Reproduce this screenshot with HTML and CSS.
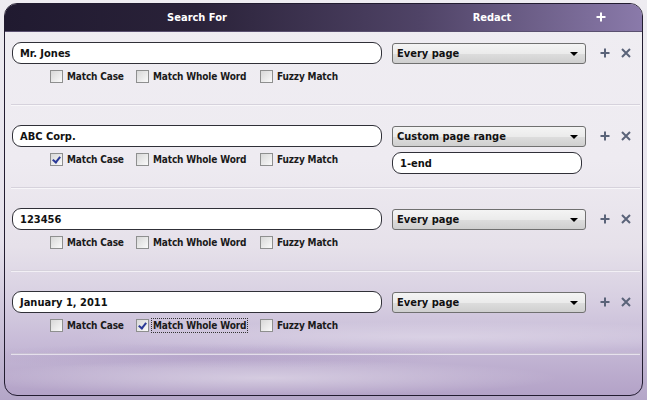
FILE: index.html
```html
<!DOCTYPE html>
<html>
<head>
<meta charset="utf-8">
<link rel="stylesheet" href="styles.css">
</head>
<body>
<div class="panel">
  <div class="header">
    <div class="h-search">Search For</div>
    <div class="h-redact">Redact</div>
    <div class="h-add"><svg width="10" height="10" viewBox="0 0 10 10"><path d="M5 0.5V9.5M0.5 5H9.5" stroke="#fff" stroke-width="2"/></svg></div>
  </div>

  <div class="row first">
    <div class="search">
      <div class="field">Mr. Jones</div>
      <div class="checks">
        <label class="chk"><span class="box"></span>Match Case</label>
        <label class="chk"><span class="box"></span>Match Whole Word</label>
        <label class="chk"><span class="box"></span>Fuzzy Match</label>
      </div>
    </div>
    <div class="redact">
      <div class="select">Every page<span class="arrow"></span></div>
    </div>
    <div class="actions">
      <svg class="ico" width="10" height="10" viewBox="0 0 10 10"><path d="M5 0.5V9.5M0.5 5H9.5" stroke="#5a6379" stroke-width="2"/></svg>
      <svg class="ico" width="10" height="10" viewBox="0 0 10 10"><path d="M1 1L9 9M9 1L1 9" stroke="#5a6379" stroke-width="2"/></svg>
    </div>
  </div>

  <div class="row">
    <div class="search">
      <div class="field">ABC Corp.</div>
      <div class="checks">
        <label class="chk"><span class="box on"></span>Match Case</label>
        <label class="chk"><span class="box"></span>Match Whole Word</label>
        <label class="chk"><span class="box"></span>Fuzzy Match</label>
      </div>
    </div>
    <div class="redact">
      <div class="select">Custom page range<span class="arrow"></span></div>
      <div class="field range">1-end</div>
    </div>
    <div class="actions">
      <svg class="ico" width="10" height="10" viewBox="0 0 10 10"><path d="M5 0.5V9.5M0.5 5H9.5" stroke="#5a6379" stroke-width="2"/></svg>
      <svg class="ico" width="10" height="10" viewBox="0 0 10 10"><path d="M1 1L9 9M9 1L1 9" stroke="#5a6379" stroke-width="2"/></svg>
    </div>
  </div>

  <div class="row">
    <div class="search">
      <div class="field">123456</div>
      <div class="checks">
        <label class="chk"><span class="box"></span>Match Case</label>
        <label class="chk"><span class="box"></span>Match Whole Word</label>
        <label class="chk"><span class="box"></span>Fuzzy Match</label>
      </div>
    </div>
    <div class="redact">
      <div class="select">Every page<span class="arrow"></span></div>
    </div>
    <div class="actions">
      <svg class="ico" width="10" height="10" viewBox="0 0 10 10"><path d="M5 0.5V9.5M0.5 5H9.5" stroke="#5a6379" stroke-width="2"/></svg>
      <svg class="ico" width="10" height="10" viewBox="0 0 10 10"><path d="M1 1L9 9M9 1L1 9" stroke="#5a6379" stroke-width="2"/></svg>
    </div>
  </div>

  <div class="row last">
    <div class="search">
      <div class="field">January 1, 2011</div>
      <div class="checks">
        <label class="chk"><span class="box"></span>Match Case</label>
        <label class="chk"><span class="box on"></span><span class="focus">Match Whole Word</span></label>
        <label class="chk"><span class="box"></span>Fuzzy Match</label>
      </div>
    </div>
    <div class="redact">
      <div class="select">Every page<span class="arrow"></span></div>
    </div>
    <div class="actions">
      <svg class="ico" width="10" height="10" viewBox="0 0 10 10"><path d="M5 0.5V9.5M0.5 5H9.5" stroke="#5a6379" stroke-width="2"/></svg>
      <svg class="ico" width="10" height="10" viewBox="0 0 10 10"><path d="M1 1L9 9M9 1L1 9" stroke="#5a6379" stroke-width="2"/></svg>
    </div>
  </div>
</div>
</body>
</html>
```
FILE: styles.css
```css
html, body { margin: 0; padding: 0; }
body {
  width: 647px; height: 400px; overflow: hidden;
  font-family: "DejaVu Sans Condensed", "DejaVu Sans", sans-serif;
  background: linear-gradient(180deg, #eeecf1 0%, #e6e2ec 60%, #b4a6c8 100%);
}
.panel {
  box-sizing: border-box;
  margin: 3px 4px 0 4px;
  height: 393px;
  border: 1px solid #221c30;
  border-radius: 13px;
  overflow: hidden;
  background:
    radial-gradient(ellipse 420px 26px at 260px 374px, rgba(255,255,255,0.4), rgba(255,255,255,0) 70%),
    radial-gradient(ellipse 520px 22px at 430px 333px, rgba(255,255,255,0.3), rgba(255,255,255,0) 70%),
    radial-gradient(ellipse 360px 18px at 200px 352px, rgba(150,125,180,0.25), rgba(150,125,180,0) 70%),
    linear-gradient(180deg, #efedf2 0%, #eeebf1 40%, #e6e1ea 62%, #d8d0e2 75%, #c8bcd8 86%, #b3a2c7 100%);
}
.header {
  height: 27px;
  display: grid;
  grid-template-columns: 7px 370px 10px 194px 1fr;
  align-items: center;
  color: #fff;
  font-weight: bold;
  font-size: 11px;
  background: linear-gradient(90deg, #201a30 0%, #2a2239 30%, #4f4366 65%, #8a7aaa 100%);
  border-bottom: 1px solid #5a5070;
}
.h-search { grid-column: 2; text-align: center; }
.h-redact { grid-column: 4; text-align: center; padding-left: 6px; }
.h-add { grid-column: 5; padding-left: 10px; display: flex; margin-top: -1px; }

.row {
  display: grid;
  grid-template-columns: 1px 370px 10px 194px 1fr;
  padding-top: 20px;
  height: 83px;
  box-sizing: border-box;
  margin-left: 6px;
  margin-right: 2px;
  border-bottom: 1px solid #d6d2dc;
  box-shadow: 0 1px 0 rgba(255,255,255,0.6);
}
.row.first { padding-top: 10px; height: 73px; }
.row.last { border-bottom-color: rgba(200,192,210,0.9); }
.search { grid-column: 2; }
.redact { grid-column: 4; padding-top: 1px; }
.actions { grid-column: 5; display: flex; gap: 11px; padding-left: 14px; padding-top: 6px; align-items: flex-start; }
.ico { flex: none; }

.field {
  box-sizing: border-box;
  height: 22px;
  border: 1px solid #303038;
  border-radius: 9px;
  background: #fff;
  font-size: 11px;
  font-weight: bold;
  color: #111;
  padding: 4px 0 0 7px;
}
.range { width: 190px; margin-top: 5px; height: 22px; }

.checks { display: flex; padding-left: 38px; margin-top: 6px; height: 13px; align-items: center; }
.chk { display: flex; align-items: center; font-size: 10px; font-weight: bold; color: #1a1a1a; letter-spacing: -0.15px; }
.chk:nth-child(1) { width: 86px; }
.chk:nth-child(2) { width: 124px; }
.box {
  box-sizing: border-box;
  width: 13px; height: 13px;
  border: 1px solid #8e8f8f;
  background: linear-gradient(135deg, #d8d8d8 0%, #ececec 60%, #fafafa 100%);
  margin-right: 4px;
  position: relative;
  flex: none;
}
.box.on::after {
  content: "";
  position: absolute;
  left: 3px; top: 1px;
  width: 3px; height: 6px;
  border-right: 2px solid #2b3a97;
  border-bottom: 2px solid #2b3a97;
  transform: rotate(38deg);
}
.focus { outline: 1px dotted #333; outline-offset: 1px; }

.select {
  box-sizing: border-box;
  height: 21px;
  border: 1px solid #707070;
  border-radius: 3px;
  background: linear-gradient(180deg, #f4f4f4 0%, #ebebeb 50%, #dddddd 51%, #cfcfcf 100%);
  font-size: 11px;
  font-weight: bold;
  color: #111;
  padding: 3px 0 0 4px;
  position: relative;
}
.arrow {
  position: absolute;
  right: 7px; top: 8px;
  width: 0; height: 0;
  border-left: 4px solid transparent;
  border-right: 4px solid transparent;
  border-top: 4px solid #000;
}
```
